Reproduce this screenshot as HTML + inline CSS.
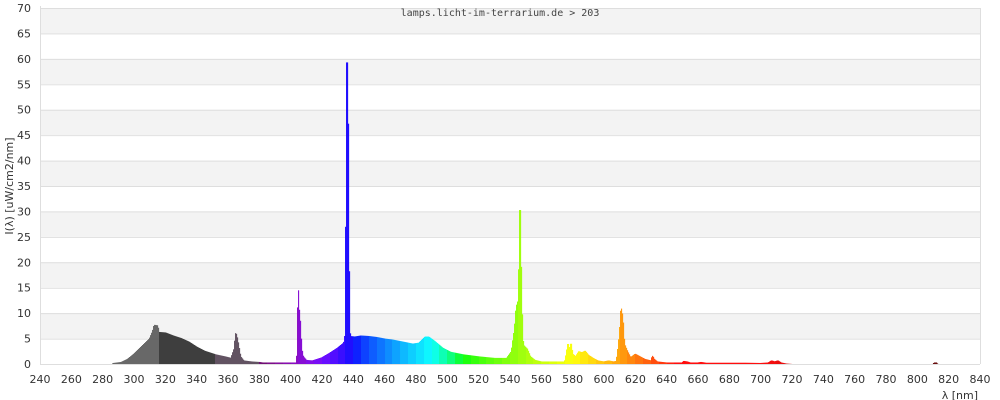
<!DOCTYPE html>
<html><head><meta charset="utf-8"><style>
body{margin:0;background:#fff;width:1000px;height:400px;overflow:hidden}
svg{display:block;font-family:"DejaVu Sans","Liberation Sans",sans-serif}
</style></head><body>
<svg id="s" width="1000" height="400" xmlns="http://www.w3.org/2000/svg"></svg>
<script>
var s=document.getElementById('s'),h='';
function X(n){return 40+(n-240)*940/600}
function Y(v){return 364-v*356/70}
for(var k=0;k<14;k++){var y1=Y(k*5+5),y0=Y(k*5);
 if(k%2==1)h+='<rect x="40" y="'+y1+'" width="940" height="'+(y0-y1)+'" fill="#f3f3f3"/>';
 h+='<line x1="40" x2="980" y1="'+(y1+.5)+'" y2="'+(y1+.5)+'" stroke="#dedede"/>';
}
h+='<line x1="980.5" x2="980.5" y1="8" y2="364" stroke="#dedede"/>';
h+='<text x="500" y="16" font-size="10" font-family="DejaVu Sans Mono,Liberation Mono,monospace" fill="#444" text-anchor="middle">lamps.licht-im-terrarium.de &gt; 203</text>';
var P=[[286,0],[287,.2],[292,.4],[296,1],[300,2],[305,3.5],[310,5],[312,6.5],[313,7.7],[315,7.6],[316,6.3],[320,6.2],[325,5.6],[330,5.1],[335,4.4],[340,3.4],[345,2.6],[350,2.1],[352,1.9],[358,1.5],[362,1.2],[364,3],[365,6.1],[366,5],[368,1.5],[370,.7],[375,.5],[380,.4],[382,.3],[404,.3],[404.5,8],[405,15],[405.5,9],[406,8.5],[407,3],[408,1.5],[410,.8],[414,.7],[420,1.3],[425,2.2],[430,3.2],[434,4.2],[435,6],[435.5,35],[436,59.3],[436.5,55],[437,27],[437.6,8],[438,5.5],[441,5.4],[445,5.6],[450,5.5],[455,5.3],[460,5],[465,4.8],[470,4.5],[478,4],[482,4.2],[486,5.4],[488,5.4],[492,4.5],[497,3.2],[502,2.4],[510,1.9],[520,1.5],[530,1.2],[538,1.2],[541,2.5],[543,7],[544,11],[545,12.3],[545.5,10],[546,25],[546.5,31.2],[547,20],[547.5,13],[548,5],[549,3.6],[551,3],[553,1.5],[556,.8],[560,.5],[575,.5],[576,2],[577,4],[578,3],[579,4],[580,2],[582,1.5],[584,2.5],[586,2.3],[588,2.6],[590,1.8],[593,1.2],[596,.7],[600,.5],[603,.7],[606,.5],[608,.6],[609,3],[610,6],[611,11],[612,9],[613,4],[615,2.5],[617,1.3],[620,2],[623,1.5],[626,1],[630,.7],[631,1.6],[632,1],[634,.5],[640,.3],[650,.3],[651,.6],[653,.5],[655,.3],[660,.3],[662,.4],[665,.25],[690,.25],[700,.2],[705,.3],[707,.7],[709,.5],[711,.7],[713,.3],[716,.1],[720,0],[810,0],[811,.3],[812,.3],[813,0]];
function I(n){for(var i=1;i<P.length;i++){if(n<=P[i][0]){var a=P[i-1],b=P[i];return a[1]+(b[1]-a[1])*(n-a[0])/(b[0]-a[0]);}}return 0}
function C(w){
 if(w<316)return '#5f5f5f'; if(w<352)return '#333333'; if(w<380)return '#5a4a5a';
 w=Math.floor(w/5)*5+2.5;
 var r=0,g=0,b=0;
 if(w<440){r=-(w-440)/60;b=1}else if(w<490){g=(w-440)/50;b=1}else if(w<510){g=1;b=-(w-510)/20}
 else if(w<580){r=(w-510)/70;g=1}else if(w<645){r=1;g=-(w-645)/65}else{r=1}
 var f=1; if(w<420)f=.3+.7*(w-380)/40; else if(w>700)f=.3+.7*(780-w)/80; if(f<.3)f=.3;
 function c(x){return Math.round(255*Math.pow(x*f,.8))}
 return 'rgb('+c(r)+','+c(g)+','+c(b)+')';
}
for(var px=X(286);px<X(814);px+=1){
 var n0=240+(px-40)*600/940, n1=n0+600/940;
 var v=0;for(var t=0;t<=4;t++)v=Math.max(v,I(n0+(n1-n0)*t/4));
 if(v<=0)continue;
 var y=Y(v);
 h+='<rect x="'+px.toFixed(2)+'" y="'+y.toFixed(2)+'" width="1.05" height="'+(364-y).toFixed(2)+'" fill="'+C((n0+n1)/2)+'"/>';
}
h+='<line x1="40.5" x2="40.5" y1="6" y2="364" stroke="#dedede"/>';
h+='<line x1="40" x2="980" y1="364.5" y2="364.5" stroke="#dedede"/>';
for(var k=0;k<=14;k++)h+='<text x="31" y="'+(Y(k*5)+4)+'" font-size="11" fill="#333" text-anchor="end">'+(k*5)+'</text>';
for(var n=240;n<=840;n+=20)h+='<text x="'+X(n)+'" y="383" font-size="11" fill="#333" text-anchor="middle">'+n+'</text>';
h+='<text x="978" y="399" font-size="11" fill="#333" text-anchor="end">λ [nm]</text>';
h+='<text transform="translate(13,186) rotate(-90)" font-size="11" fill="#333" text-anchor="middle">I(λ)  [uW/cm2/nm]</text>';
s.innerHTML=h;
</script>
</body></html>
